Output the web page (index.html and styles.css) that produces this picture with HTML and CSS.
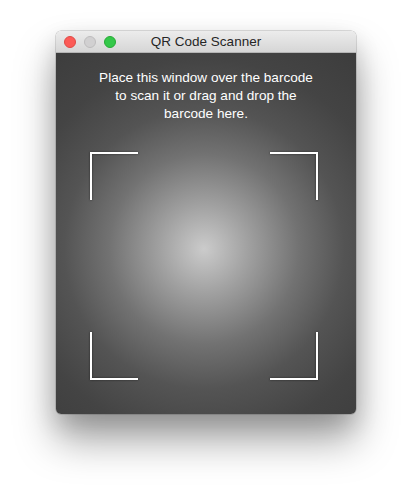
FILE: index.html
```html
<!DOCTYPE html>
<html>
<head>
<meta charset="utf-8">
<link rel="stylesheet" href="styles.css">
</head>
<body>
<div class="window">
  <div class="titlebar">
    <div class="lights">
      <span class="light red"></span>
      <span class="light grey"></span>
      <span class="light green"></span>
    </div>
    <div class="title">QR Code Scanner</div>
  </div>
  <div class="content">
    <p class="hint">Place this window over the barcode<br>to scan it or drag and drop the<br>barcode here.</p>
    <div class="frame">
      <div class="corner tl"></div>
      <div class="corner tr"></div>
      <div class="corner bl"></div>
      <div class="corner br"></div>
    </div>
  </div>
</div>
</body>
</html>
```
FILE: styles.css
```css
html, body {
  margin: 0;
  padding: 0;
  background: #ffffff;
  width: 412px;
  height: 494px;
  overflow: hidden;
}
body {
  padding-top: 31px;
  padding-left: 56px;
  box-sizing: border-box;
  font-family: "Liberation Sans", Arial, sans-serif;
}
.window {
  width: 300px;
  height: 383px;
  border-radius: 5px;
  overflow: hidden;
  display: flex;
  flex-direction: column;
  box-shadow: 0 26px 40px rgba(0,0,0,0.36), 0 0 0 0.5px rgba(0,0,0,0.25), 0 10px 24px rgba(0,0,0,0.14);
}
.titlebar {
  height: 22px;
  flex: 0 0 22px;
  background: linear-gradient(#ececec, #d6d6d6);
  display: flex;
  align-items: center;
  position: relative;
  box-sizing: border-box;
  border-bottom: 1px solid #b5b5b5;
}
.lights {
  display: flex;
  gap: 8px;
  padding-left: 8px;
  position: absolute;
  left: 0;
  top: 5px;
}
.light {
  width: 12px;
  height: 12px;
  border-radius: 50%;
  box-sizing: border-box;
}
.red { background: #fc5b57; border: 0.5px solid #de4a45; }
.grey { background: #d1d0d1; border: 0.5px solid #bdbcbd; }
.green { background: #34c84a; border: 0.5px solid #27aa35; }
.title {
  flex: 1;
  text-align: center;
  font-size: 13.5px;
  color: #262626;
  line-height: 22px;
}
.content {
  flex: 1;
  display: flex;
  flex-direction: column;
  align-items: center;
  background: radial-gradient(circle at 148px 196px, #cbcbcb 0px, #a0a0a0 45px, #727272 95px, #545454 140px, #444444 190px, #3b3b3b 260px);
}
.hint {
  margin: 16px 0 0 0;
  color: #ffffff;
  font-size: 13.6px;
  line-height: 18px;
  text-align: center;
}
.frame {
  margin-top: 29px;
  margin-left: -4px;
  width: 228px;
  height: 228px;
  display: grid;
  grid-template-columns: 1fr 1fr;
  grid-template-rows: 1fr 1fr;
}
.corner {
  width: 48px;
  height: 48px;
  box-sizing: border-box;
  border: 0 solid #ffffff;
  filter: drop-shadow(0 0 1px rgba(0,0,0,0.5));
}
.tl { border-top-width: 2px; border-left-width: 2px; justify-self: start; align-self: start; }
.tr { border-top-width: 2px; border-right-width: 2px; justify-self: end; align-self: start; }
.bl { border-bottom-width: 2px; border-left-width: 2px; justify-self: start; align-self: end; }
.br { border-bottom-width: 2px; border-right-width: 2px; justify-self: end; align-self: end; }
```
